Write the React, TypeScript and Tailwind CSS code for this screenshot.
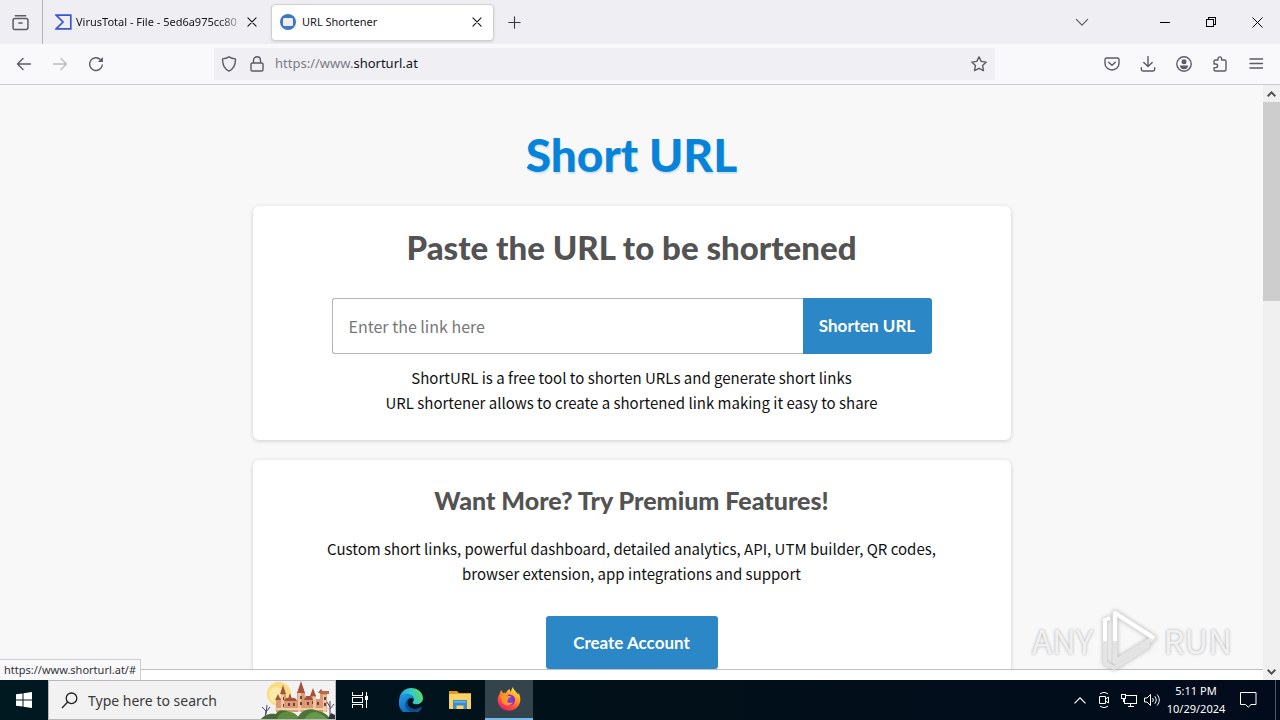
import { useState } from "react";
import type { ReactNode } from "react";

// Small helper for the line icons used in the browser chrome
function Glyph({ children, size = 16, className = "" }: { children: ReactNode; size?: number; className?: string }) {
  return (
    <svg
      width={size}
      height={size}
      viewBox="0 0 16 16"
      fill="none"
      stroke="currentColor"
      strokeWidth="1.4"
      strokeLinecap="round"
      strokeLinejoin="round"
      className={`shrink-0 ${className}`}
      aria-hidden="true"
    >
      {children}
    </svg>
  );
}

function CloseGlyph() {
  return (
    <Glyph size={10}>
      <path d="M1.500 1.500l13 13M14.500 1.500l-13 13" strokeWidth="1.800" />
    </Glyph>
  );
}

function TabBar() {
  return (
    <div className="flex h-11 shrink-0 items-center bg-[#efeef3] text-[#15141a]">
      <button aria-label="Firefox View" className="flex h-full w-[43px] items-center justify-center border-r border-[#b4b3ba] pr-0.5 text-[#5b5b66]">
        <Glyph size={17}>
          <path d="M3.200 1.600h9.600M1 6c0-1.200.6-1.800 1.800-1.800h10.400C14.400 4.200 15 4.800 15 6v6.800c0 1.200-.6 1.800-1.800 1.800H2.800C1.600 14.600 1 14 1 12.800zM6.500 8.500h3" />
        </Glyph>
      </button>
      <div className="flex h-9 w-[227px] items-center pr-3 pl-3">
        <svg width="17" height="16" viewBox="0 0 17 16" className="shrink-0" aria-hidden="true">
          <path d="M1.200 1.200h14.600v13.600H1.200L8 8z" fill="none" stroke="#3b55d9" strokeWidth="1.700" />
        </svg>
        <span className="ml-1 flex-1 text-[11px] whitespace-nowrap [mask-image:linear-gradient(to_right,black_84%,transparent)]">
          VirusTotal - File - 5ed6a975cc80
        </span>
        <button aria-label="Close tab VirusTotal" className="flex h-5 w-3 items-center justify-center">
          <CloseGlyph />
        </button>
      </div>
      <div className="ml-px flex h-[37px] w-[223px] items-center rounded-sm border border-[#d0cfd6] bg-white pr-2.5 pl-2 shadow-sm">
        <svg width="16" height="16" viewBox="0 0 16 16" className="shrink-0" aria-hidden="true">
          <circle cx="8" cy="8" r="8" fill="#3e76c9" />
          <rect x="3" y="4" width="10" height="8" rx="1.500" fill="#f2efe8" />
        </svg>
        <span className="ml-1.5 flex-1 text-[11px]">URL Shortener</span>
        <button aria-label="Close tab URL Shortener" className="flex h-5 w-3 items-center justify-center">
          <CloseGlyph />
        </button>
      </div>
      <button aria-label="New tab" className="ml-2.5 flex h-8 w-5 items-center justify-center text-[#3a3944]">
        <Glyph size={13}>
          <path d="M8 1v14M1 8h14" />
        </Glyph>
      </button>
      <div className="ml-auto flex items-center">
        <button aria-label="List all tabs" className="mr-[37px] flex h-11 w-[46px] items-center justify-center text-[#5b5b66]">
          <Glyph size={14}>
            <path d="M1.500 5L8 11.500 14.500 5" />
          </Glyph>
        </button>
        <button aria-label="Minimize" className="flex h-11 w-[46px] items-center justify-center">
          <span className="h-px w-2.5 bg-black" />
        </button>
        <button aria-label="Restore" className="flex h-11 w-[46px] items-center justify-center">
          <svg width="10" height="10" viewBox="0 0 10 10" fill="none" stroke="black" shapeRendering="crispEdges" aria-hidden="true">
            <path d="M.5 2.500h7v7h-7zM2.500 2.500v-2h7v7h-2" />
          </svg>
        </button>
        <button aria-label="Close window" className="flex h-11 w-[46px] items-center justify-center">
          <svg width="11" height="11" viewBox="0 0 11 11" stroke="black" aria-hidden="true">
            <path d="M.5.500l10 10M10.500.500l-10 10" />
          </svg>
        </button>
      </div>
    </div>
  );
}

function NavBar() {
  return (
    <div className="flex h-[41px] shrink-0 items-center border-b border-[#cccccc] bg-[#f9f9fb] text-[#5b5b66]">
      <div className="flex w-[214px] shrink-0 items-center pl-4">
        <button aria-label="Back" className="flex w-4 justify-center text-[#5b5b66]">
          <Glyph>
            <path d="M14.500 8h-13M7 2.500L1.500 8 7 13.500" />
          </Glyph>
        </button>
        <button aria-label="Forward" disabled className="ml-5 flex w-4 justify-center text-[#bcbbc2]">
          <Glyph>
            <path d="M1.500 8h13M9 2.500L14.500 8 9 13.500" />
          </Glyph>
        </button>
        <button aria-label="Reload" className="ml-5 flex w-4 justify-center text-[#5b5b66]">
          <Glyph>
            <path d="M14.300 9a6.400 6.400 0 1 1-1.700-5.300L14 5.200" />
            <path d="M14.900 1v5H9.900z" fill="currentColor" stroke="none" />
          </Glyph>
        </button>
      </div>
      <div className="flex h-8 min-w-0 flex-1 items-center bg-[#f0f0f4] pr-2 pl-[7px]">
        <Glyph>
          <path d="M8 .8c2 1.300 4.200 1.900 6.400 2.100.3 5.300-1.600 10-6.400 12.300C3.200 12.900 1.300 8.200 1.600 2.900 3.800 2.700 6 2.100 8 .8z" />
        </Glyph>
        <Glyph className="ml-3">
          <path d="M3.300 7h9.400c.8 0 1.300.5 1.300 1.300v5.400c0 .8-.5 1.300-1.300 1.300H3.300C2.500 15 2 14.500 2 13.700V8.300C2 7.500 2.500 7 3.300 7zM4.500 7V4.400C4.500 2.200 6 .8 8 .8s3.500 1.400 3.500 3.600V7" />
        </Glyph>
        <p className="ml-2.5 flex-1 text-[13px] text-[#7b7a84]">
          https://www.<span className="text-[#15141a]">shorturl.at</span>
        </p>
        <button aria-label="Bookmark this page">
          <Glyph>
            <path d="M8 .9l2.200 4.500 5 .7-3.600 3.500.9 5L8 12.300l-4.500 2.300.9-5L.8 6.100l5-.7z" />
          </Glyph>
        </button>
      </div>
      <div className="flex w-[285px] shrink-0 items-center justify-end gap-5 pr-4">
        <button aria-label="Save to Pocket">
          <Glyph>
            <path d="M2.800 2h10.400C14.300 2 15 2.700 15 3.800v3.700a7 6.500 0 0 1-14 0V3.800C1 2.700 1.700 2 2.800 2zM4.600 6.200L8 9.300l3.400-3.100" />
          </Glyph>
        </button>
        <button aria-label="Downloads">
          <Glyph>
            <path d="M8 .5v10M3.800 6.500L8 10.600l4.200-4.100M1.300 11.800v1.500c0 1 .7 1.700 1.700 1.700h10c1 0 1.700-.7 1.700-1.700v-1.500" />
          </Glyph>
        </button>
        <button aria-label="Account">
          <Glyph>
            <circle cx="8" cy="8" r="7.200" />
            <circle cx="8" cy="5.700" r="2.500" fill="currentColor" stroke="none" />
            <path d="M3.900 9.500h8.200c0 2.200-1.800 3.700-4.100 3.700S3.900 11.700 3.900 9.500z" fill="currentColor" stroke="none" />
          </Glyph>
        </button>
        <button aria-label="Extensions">
          <Glyph>
            <path d="M2 8V5.500C2 4.600 2.500 4 3.500 4H6V2.700C6 1.600 6.800.9 7.800.9s1.800.7 1.800 1.800V4h2.900c1 0 1.500.6 1.500 1.500v8c0 1-.5 1.500-1.500 1.500h-9C2.500 15 2 14.500 2 13.500V11.600h1.800c1 0 1.800-.8 1.800-1.800S4.800 8 3.800 8z" />
          </Glyph>
        </button>
        <button aria-label="Open application menu">
          <Glyph>
            <path d="M2 3h12.500M2 7.500h12.500M2 12h12.500" />
          </Glyph>
        </button>
      </div>
    </div>
  );
}

function Page() {
  const [link, setLink] = useState("");

  return (
    <div className="min-h-0 flex-1 overflow-hidden bg-[#f8f8f8] px-4 pt-10 text-center font-['Noto_Sans_CJK_SC',sans-serif]">
      <h1 className="mb-[21px] font-[Lato,sans-serif] text-[46px] leading-[60px] font-black text-[#0784da] [text-shadow:1px_2px_1px_#d5e4ef]">Short URL</h1>

      <section className="mx-auto max-w-[758px] rounded-md bg-white px-4 pt-5 pb-[25px] shadow-[0_1px_4px_#cccccc]">
        <h2 className="font-[Lato,sans-serif] text-[33px] leading-[42px] font-black text-[#535353]">Paste the URL to be shortened</h2>
        <form className="mx-auto mt-[30px] flex h-14 max-w-[600px]" onSubmit={(e) => e.preventDefault()}>
          <input
            type="text"
            aria-label="Enter the link here"
            placeholder="Enter the link here"
            value={link}
            onChange={(e) => setLink(e.target.value)}
            className="min-w-0 flex-1 rounded-l-[3px] border border-r-0 border-[#b5b5b5] px-4 text-[16px] placeholder:text-[#777777] focus:outline-none"
          />
          <button type="submit" className="w-[129px] rounded-r-[3px] bg-[#2b87c5] font-[Lato,sans-serif] text-[17px] font-bold text-white">
            Shorten URL
          </button>
        </form>
        <p className="mt-[11px] text-[15px] leading-[25px] text-[#111111]">
          ShortURL is a free tool to shorten URLs and generate short links
          <br />
          URL shortener allows to create a shortened link making it easy to share
        </p>
      </section>

      <section className="mx-auto mt-5 max-w-[758px] rounded-md bg-white px-4 pt-5 pb-10 shadow-[0_1px_4px_#cccccc]">
        <h2 className="font-[Lato,sans-serif] text-[25px] leading-10 font-black text-[#535353]">Want More? Try Premium Features!</h2>
        <p className="mt-4 text-[15px] leading-[25px] text-[#111111]">
          Custom short links, powerful dashboard, detailed analytics, API, UTM builder, QR codes,
          <br />
          browser extension, app integrations and support
        </p>
        <a href="#" className="mt-[30px] inline-flex h-[53px] w-[172px] items-center justify-center rounded-[3px] bg-[#2b87c5] font-[Lato,sans-serif] text-[17px] font-bold text-white">
          Create Account
        </a>
      </section>
    </div>
  );
}

function Scrollbar() {
  return (
    <div className="flex w-[17px] shrink-0 flex-col items-center bg-[#f0f0f0] text-[#505050]">
      <button aria-label="Scroll up" className="flex h-[17px] w-full items-center justify-center">
        <svg width="9" height="6" viewBox="0 0 9 6" fill="none" stroke="currentColor" strokeWidth="2" aria-hidden="true">
          <path d="M.7 5.200L4.500 1.400l3.800 3.800" />
        </svg>
      </button>
      <div className="h-[199px] w-full bg-[#cdcdcd]" />
      <button aria-label="Scroll down" className="mt-auto flex h-[17px] w-full items-center justify-center">
        <svg width="9" height="6" viewBox="0 0 9 6" fill="none" stroke="currentColor" strokeWidth="2" aria-hidden="true">
          <path d="M.7.800l3.800 3.800L8.300.800" />
        </svg>
      </button>
    </div>
  );
}

// Translucent brand mark floating over the lower right of the page
function Watermark() {
  return (
    <div className="pointer-events-none absolute right-12 bottom-2 flex h-16 items-center gap-1 font-['Noto_Sans_CJK_SC',sans-serif] text-[33px] leading-none text-[#f1f1f1] [text-shadow:0_0_3px_#a8a8a8]">
      <span>ANY</span>
      <svg width="62" height="62" viewBox="0 0 62 62" fill="none" strokeLinejoin="round" aria-hidden="true" className="drop-shadow-[0_0_2px_#b0b0b0]">
        <path d="M18 4L57 29 18 53z" stroke="#e4e4e4" strokeWidth="5" />
        <path d="M18 32V4L57 29" stroke="#ffffff" strokeWidth="4" />
        <path d="M8 32v22l9 5L53 36" stroke="#e4e4e4" strokeWidth="4" />
        <path d="M8 32V11l5-2" stroke="#ffffff" strokeWidth="4" />
      </svg>
      <span>RUN</span>
    </div>
  );
}

function CastleArt() {
  return (
    <svg width="74" height="38" viewBox="0 0 74 38" className="shrink-0 self-end" aria-hidden="true">
      <circle cx="18" cy="13" r="12" fill="#fbdc83" />
      <circle cx="16" cy="14" r="8" fill="#fdebaa" />
      <path d="M15 31V17h5v-5h5v7h11V11h8v7h6v-4h5v4h4v-7h7v20z" fill="#d99a78" />
      <path d="M20 31V14h3v17zM37 31V12h3v19zM52 31V16h3v15zM62 31V14h3v17z" fill="#f0c6a2" />
      <path d="M19 13l3-9 3 9zM36 12L40 0l4 12zM14 19l3-6 3 6zM27 18l2-6 2 6zM49 15l3-8 3 8zM57 12l3-4 3 4zM23 20l2-3h9l2 3zM43 19l2-4h5l2 4z" fill="#a6523c" />
      <path d="M59 10h9v3h-9z" fill="#bb6b4c" />
      <g fill="#7b3b31">
        <path d="M22 16h1v3h-1zM39 15h2v3h-2zM39 21h2v3h-2zM27 22h2v3h-2zM32 22h2v3h-2zM46 21h2v3h-2zM51 20h1v3h-1zM56 21h2v3h-2zM63 16h2v3h-2zM63 22h2v3h-2zM22 23h1v3h-1z" />
      </g>
      <path d="M14 27h54v2H14z" fill="#f3d0a8" />
      <path d="M4 38l1-8-4-4M5 31l4-5M5 33l1-9M69 38V26l-3-5M69 28l4-5M69 26v-6" stroke="#4c426d" fill="none" />
      <path d="M0 38c4-5 10-6 15-5 3-6 14-5 20 5z" fill="#446b33" />
      <path d="M16 38c2-9 16-11 23 0z" fill="#5c8c3e" />
      <path d="M36 38c4-9 12-12 21-8 6 1 10 4 12 8z" fill="#497638" />
      <path d="M43 38c5-7 11-9 17-5 3 2 5 3 6 5z" fill="#67994b" />
      <path d="M67 38l3-6 4 2v4z" fill="#30363a" />
    </svg>
  );
}

function Taskbar() {
  return (
    <div className="flex h-10 shrink-0 items-center bg-gradient-to-r from-[#001820] via-[#011019] to-[#020b1c] text-white">
      <button aria-label="Start" className="flex h-full w-12 items-center justify-center">
        <svg width="16" height="16" viewBox="0 0 16 16" fill="white" aria-hidden="true">
          <path d="M0 2.300l6.500-.9v6.100H0zM7.500 1.200L16 0v7.500H7.500zM0 8.500h6.500v6.100L0 13.700zM7.500 8.500H16V16l-8.500-1.200z" />
        </svg>
      </button>
      <label className="flex h-full w-72 items-center border border-[#b9b9b9] bg-[#f2f2f2] pl-3 text-[#333333]">
        <svg width="17" height="17" viewBox="0 0 17 17" fill="none" stroke="#222222" strokeWidth="1.300" className="shrink-0" aria-hidden="true">
          <circle cx="10.500" cy="6.300" r="5.300" />
          <path d="M6.700 10L1 16" />
        </svg>
        <input
          type="text"
          aria-label="Type here to search"
          placeholder="Type here to search"
          className="ml-2.5 min-w-0 flex-1 text-[14px] placeholder:text-[#3a3a3a] focus:outline-none"
        />
        <CastleArt />
      </label>
      <button aria-label="Task View" className="flex h-full w-12 items-center justify-center">
        <svg width="18" height="16" viewBox="0 0 18 16" fill="none" stroke="white" shapeRendering="crispEdges" aria-hidden="true">
          <path d="M1.500 0v3.500h10V0M1.500 16v-3.500h10V16M1.500 5.500h10v5h-10zM15.500 0v16" />
          <path d="M14 4h3v4h-3z" fill="white" stroke="none" />
        </svg>
      </button>
      <button aria-label="Microsoft Edge" className="ml-0.5 flex h-full w-[49px] items-center justify-center">
        <svg width="24" height="24" viewBox="0 0 24 24" aria-hidden="true">
          <defs>
            <linearGradient id="edgeTop" x1="0" y1="0.600" x2="1" y2="0.300">
              <stop offset="0" stopColor="#1f9ee0" />
              <stop offset="0.500" stopColor="#30c6cf" />
              <stop offset="1" stopColor="#67dc58" />
            </linearGradient>
            <linearGradient id="edgeBody" x1="0" y1="0" x2="0.600" y2="1">
              <stop offset="0" stopColor="#1fa0e8" />
              <stop offset="1" stopColor="#0c59b3" />
            </linearGradient>
          </defs>
          <path d="M.2 11C1 4.500 6 0 12.300 0 18.800 0 24 4.600 24 10.300c0 3.600-2.900 6-6.200 6-2.500 0-4.200-.8-4.200-1.800 0-.8 1.200-1.200 1.200-3 0-2.500-2.500-5-6.300-5C4.700 6.500 1.500 8.200.2 11z" fill="url(#edgeTop)" />
          <path d="M0 12.500C.3 9 3.400 6.300 7.500 6.300c4 0 7.200 2.300 7.300 5-1-1.200-2.100-1.500-3.300-1.300-2.200.5-3.300 2.600-3.200 4.800.2 3.800 3.500 6.300 7.400 6.300 2.500 0 4.500-.8 6.300-1.800.6-.3 1 .2.600.7A12 12 0 0 1 0 12.500z" fill="url(#edgeBody)" />
          <path d="M8.300 14.800c.2 3.800 3.500 6.300 7.400 6.300 2.500 0 4.500-.8 6.300-1.800.6-.3 1 .2.600.7-2.300 3-5.500 4.300-8.600 4-5-.5-8.300-4.500-7.500-8.500.2-2.800 2.200-5.200 5-5.500-2.200.5-3.300 2.600-3.200 4.800z" fill="#114a8b" />
        </svg>
      </button>
      <button aria-label="File Explorer" className="flex h-full w-[50px] items-center justify-center">
        <svg width="22" height="20" viewBox="0 0 22 20" aria-hidden="true">
          <path d="M0 1h8l2 2h12v5H0z" fill="#e59a20" />
          <path d="M0 4h22v15H0z" fill="#fbd364" />
          <path d="M4 10h14v9h-3.500v-3.500h-7V19H4z" fill="#3c8dcc" />
          <path d="M5 11h12v1.500H5z" fill="#66b5e8" />
        </svg>
      </button>
      <button aria-label="Firefox" className="flex h-full w-12 items-center justify-center border-b-2 border-[#76b9ed] bg-[#33444c]">
        <svg width="24" height="24" viewBox="0 0 24 24" aria-hidden="true">
          <defs>
            <linearGradient id="foxBody" x1="0.800" y1="0" x2="0.200" y2="1">
              <stop offset="0" stopColor="#fff04a" />
              <stop offset="0.350" stopColor="#ffa425" />
              <stop offset="0.650" stopColor="#ff523d" />
              <stop offset="1" stopColor="#e91777" />
            </linearGradient>
            <radialGradient id="foxGlobe">
              <stop offset="0" stopColor="#6f4df0" />
              <stop offset="1" stopColor="#8b2bb5" />
            </radialGradient>
          </defs>
          <path d="M2.500 7L4 3l2.200 3c1-.4 2-.4 2.900-.3C10 3.600 11.500 2.500 13 2c-.5 1 0 2 1 3 .3-2 .8-3.500 2-5 .3 3 3.500 4.500 5 7.500l.5-1.500c1.500 2.500 2 5 1.800 7.500C22.800 19.300 18 23.800 12 23.800S.8 19.200.7 13C.6 10.500 1.500 8.500 2.500 7z" fill="url(#foxBody)" />
          <circle cx="12.500" cy="13" r="5.600" fill="url(#foxGlobe)" />
          <path d="M3.500 9c2.500-2.500 5.500-2.200 7.500-.3 1.400.2 2.500.3 3 .8-.2 1.200-2 1.300-2.800 2.100-.4 1 0 2-1.200 2.600 1 2 3.800 2.300 5.800.7-1 3-4.300 4.300-7.300 3C5.500 17 3.500 13 3.500 9z" fill="#ff9529" />
        </svg>
      </button>

      <div className="ml-auto flex h-full items-center">
        <button aria-label="Show hidden icons" className="flex w-6 justify-center">
          <svg width="12" height="7" viewBox="0 0 12 7" fill="none" stroke="white" strokeWidth="1.200" aria-hidden="true">
            <path d="M.5 6.300L6 .8l5.500 5.500" />
          </svg>
        </button>
        <button aria-label="Meet now" className="flex w-6 justify-center">
          <svg width="14" height="16" viewBox="0 0 14 16" fill="none" stroke="white" aria-hidden="true">
            <path d="M2.500 4.500h6v7h-6zM8.500 7l3-2v6l-3-2M3 2c2.500-2 5.500-2 8 0M3 14c2.500 2 5.500 2 8 0" />
          </svg>
        </button>
        <button aria-label="Network" className="flex w-6 justify-center">
          <svg width="17" height="15" viewBox="0 0 17 15" fill="none" stroke="white" shapeRendering="crispEdges" aria-hidden="true">
            <path d="M5.500 2.500h11v8h-12V6M8 13.500h6M10.500 10.500v3M1.500 1.500h4v4h-4zM3.500 5.500v3" />
          </svg>
        </button>
        <button aria-label="Volume" className="flex w-6 justify-center">
          <svg width="17" height="14" viewBox="0 0 17 14" fill="none" stroke="white" aria-hidden="true">
            <path d="M.5 5v4H3l3.500 3.500v-11L3 5zM8.500 5c1 1.300 1 2.700 0 4M10.700 3.200c2 2.300 2 5.300 0 7.600M13 1.500c3 3.300 3 7.700 0 11" />
          </svg>
        </button>
        <button className="w-16 text-[11px] leading-[18px] text-white">
          5:11 PM
          <br />
          10/29/2024
        </button>
        <button aria-label="Notifications" className="flex w-10 justify-center">
          <svg width="17" height="16" viewBox="0 0 17 16" fill="none" stroke="white" aria-hidden="true">
            <path d="M.5.500h15.500v12H11L8.300 15.200 5.500 12.500h-5z" />
          </svg>
        </button>
        <button aria-label="Show desktop" className="mr-1 h-full w-2 border-r border-[#4c5561]" />
      </div>
    </div>
  );
}

export default function App() {
  return (
    <div className="flex h-screen flex-col overflow-hidden bg-white font-['Noto_Sans','Open_Sans',sans-serif]">
      <TabBar />
      <NavBar />
      <main className="relative flex min-h-0 flex-1">
        <div className="flex min-w-0 flex-1 flex-col">
          <Page />
          <div className="h-[11px] shrink-0 border-t border-[#bfbfc4] bg-white" />
        </div>
        <Scrollbar />
        <Watermark />
        <div className="absolute bottom-0 left-0 flex h-[21px] items-center border-t border-r border-[#cfcfcf] bg-[#f9f9fb] px-1 text-[11px] text-[#333333]">
          https://www.shorturl.at/#
        </div>
      </main>
      <Taskbar />
    </div>
  );
}
